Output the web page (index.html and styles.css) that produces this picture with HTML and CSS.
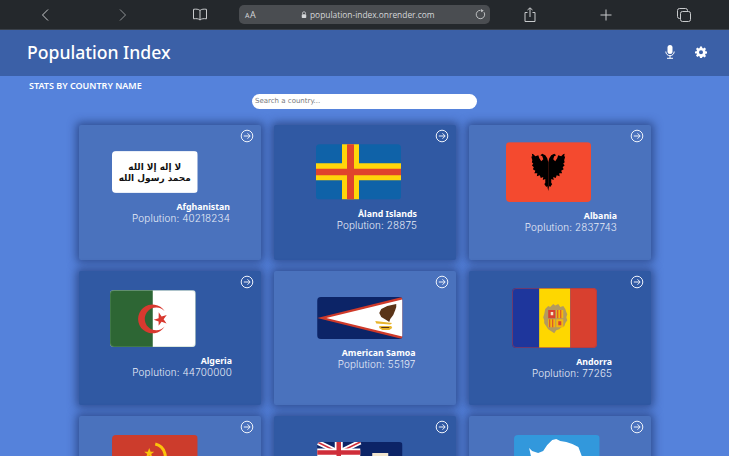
FILE: index.html
```html
<!DOCTYPE html>
<html lang="en">
<head>
<meta charset="utf-8">
<title>Population Index</title>
<link rel="stylesheet" href="styles.css">
</head>
<body>
<div class="browserbar">
  <svg class="tb tb-back" viewBox="0 0 12 14"><path d="M8 1.500 2.500 7 8 12.500" class="tbs"/></svg>
  <svg class="tb tb-fwd" viewBox="0 0 12 14"><path d="M4 1.500 9.500 7 4 12.500" class="tbs dim"/></svg>
  <svg class="tb tb-book" viewBox="0 0 16 13"><path d="M8 2.500C6.500 1 4 1 1.500 1.300v9.500C4 10.500 6.500 10.500 8 12c1.500-1.500 4-1.500 6.500-1.200V1.300C12 1 9.500 1 8 2.500Zm0 0V12" class="tbs"/></svg>
  <div class="urlbar">
    <span class="aa"><small>A</small>A</span>
    <span class="url"><svg class="lock" viewBox="0 0 8 9"><path d="M2 4V2.800a2 2 0 0 1 4 0V4" fill="none" stroke="#d5d7d9"/><rect x="1" y="4" width="6" height="5" rx="1" fill="#d5d7d9"/></svg>population-index.onrender.com</span>
    <svg class="reload" viewBox="0 0 12 12"><path d="M9.800 3.500A4.600 4.600 0 1 1 6 1.400" class="tbs"/><path d="M6.500 0 9.500 1.800 6.800 3.500Z" fill="#c8cacc"/></svg>
  </div>
  <svg class="tb tb-share" viewBox="0 0 12 15"><path d="M3.500 5.500H1v9h10v-9H8.500M6 10V1M3.500 3 6 .8 8.500 3" class="tbs"/></svg>
  <svg class="tb tb-plus" viewBox="0 0 12 12"><path d="M6 .5v11M.5 6h11" class="tbs"/></svg>
  <svg class="tb tb-tabs" viewBox="0 0 14 14"><rect x="3.500" y="3.500" width="10" height="10" rx="2" class="tbs"/><path d="M3 10.500h-.5a2 2 0 0 1-2-2V2.500a2 2 0 0 1 2-2h6a2 2 0 0 1 2 2V3" class="tbs"/></svg>
</div>

<header class="appbar">
  <h1>Population Index</h1>
  <div class="appicons">
    <svg class="ic-mic" viewBox="0 0 10 14"><rect x="2.500" y="0" width="5" height="9" rx="2.500" fill="#fff"/><path d="M.8 6.500a4.200 4.200 0 0 0 8.400 0M5 11v2.300M2 13.300h6" fill="none" stroke="#fff"/></svg>
    <svg class="ic-gear" viewBox="0 0 24 24"><path fill="#fff" fill-rule="evenodd" d="M10 1h4l.6 3.200 1.900.8 2.700-1.800 2.800 2.800-1.800 2.700.8 1.900L24 11v4l-3 .6-.8 1.900 1.800 2.700-2.800 2.800-2.700-1.800-1.900.8L14 24h-4l-.6-3.200-1.900-.8-2.700 1.800L2 19l1.800-2.700-.8-1.900L0 15v-4l3.200-.6.800-1.900L2 5.800 4.800 3l2.700 1.800 1.900-.8ZM12 8.500a4 4 0 1 0 0 8 4 4 0 0 0 0-8Z"/></svg>
  </div>
</header>

<main class="page">
  <div class="topline">
    <h2>STATS BY COUNTRY NAME</h2>
    <input class="search" type="text" placeholder="Search a country...">
  </div>

  <section class="grid">
    <article class="card light c-af">
      <svg class="go" viewBox="0 0 14 14"><circle cx="7" cy="7" r="5.800"/><path d="M3.800 7h6.200M7.500 4.300 10.200 7 7.500 9.700"/></svg>
      <svg class="flag f42" viewBox="0 0 86 42"><rect width="86" height="42" fill="#fff"/><text class="shahada" x="43" y="19" text-anchor="middle" direction="rtl">لا إله إلا الله</text><text class="shahada" x="43" y="30" text-anchor="middle" direction="rtl">محمد رسول الله</text></svg>
      <div class="meta"><strong>Afghanistan</strong><span>Poplution: 40218234</span></div>
    </article>

    <article class="card dark c-ax">
      <svg class="go" viewBox="0 0 14 14"><circle cx="7" cy="7" r="5.800"/><path d="M3.800 7h6.200M7.500 4.300 10.200 7 7.500 9.700"/></svg>
      <svg class="flag f55" viewBox="0 0 85 55"><rect width="85" height="55" fill="#0f62a8"/><path d="M26 0h17v55H26zM0 19h85v17H0z" fill="#ffd60a"/><path d="M31 0h7v55h-7zM0 24.500h85v6.500H0z" fill="#e0442c"/></svg>
      <div class="meta"><strong>Åland Islands</strong><span>Poplution: 28875</span></div>
    </article>

    <article class="card light c-al">
      <svg class="go" viewBox="0 0 14 14"><circle cx="7" cy="7" r="5.800"/><path d="M3.800 7h6.200M7.500 4.300 10.200 7 7.500 9.700"/></svg>
      <svg class="flag f60" viewBox="0 0 86 60"><rect width="86" height="60" fill="#f44a2f"/><path fill="#000" transform="translate(42.500 0)" d="M0 20 1 16 3 13 6 11.500 8 13 6 14 5 17 7 19 9 16 10 13 13 14 15 12 16.500 11.500 16 14 17 14.500 16 18 16.500 20 15 21.500 16.500 23 14.500 25 15.500 27 13 28.500 14 31 11 31 11.500 34 8.500 33 7.500 36 5 35 5.500 38 3 37 3 41 4 42 2 45 1 44 0 49Z"/><path fill="#000" transform="translate(42.500 0) scale(-1 1)" d="M0 20 1 16 3 13 6 11.500 8 13 6 14 5 17 7 19 9 16 10 13 13 14 15 12 16.500 11.500 16 14 17 14.500 16 18 16.500 20 15 21.500 16.500 23 14.500 25 15.500 27 13 28.500 14 31 11 31 11.500 34 8.500 33 7.500 36 5 35 5.500 38 3 37 3 41 4 42 2 45 1 44 0 49Z"/></svg>
      <div class="meta"><strong>Albania</strong><span>Poplution: 2837743</span></div>
    </article>

    <article class="card dark c-dz">
      <svg class="go" viewBox="0 0 14 14"><circle cx="7" cy="7" r="5.800"/><path d="M3.800 7h6.200M7.500 4.300 10.200 7 7.500 9.700"/></svg>
      <svg class="flag f57 flagline" viewBox="0 0 86 57"><rect width="86" height="57" fill="#fff"/><rect width="43" height="57" fill="#2d6634"/><path fill="#d8392f" d="M55 21a14.500 14.500 0 1 0 0 15.500 11.500 11.500 0 1 1 0-15.500Z"/><path fill="#d8392f" d="m49 22 2.900 4.300 5.200-1.500-3.200 4.200 3 4.300-5-1.800-3 4.200V31.400l-5-1.700 5-1.500Z"/></svg>
      <div class="meta"><strong>Algeria</strong><span>Poplution: 44700000</span></div>
    </article>

    <article class="card light c-as">
      <svg class="go" viewBox="0 0 14 14"><circle cx="7" cy="7" r="5.800"/><path d="M3.800 7h6.200M7.500 4.300 10.200 7 7.500 9.700"/></svg>
      <svg class="flag f42" viewBox="0 0 85 42"><rect width="85" height="42" fill="#0c2467"/><path d="M85 0v42L0 21Z" fill="#cf3a2a"/><path d="M85 2.500v37L9 21Z" fill="#fff"/><path fill="#5a3418" d="M79 7 70 9l-6 3-2 4 2 4 5 3 3 2 1-3 3-4 2-5 1-3z"/><path fill="#e8b52d" d="M58 24l17 2-2 1.500-14-1zM62 29h12l1 2-3 2h-7l-3-2z"/><path fill="#5a3418" d="M64 30h8v1h-8z"/></svg>
      <div class="meta"><strong>American Samoa</strong><span>Poplution: 55197</span></div>
    </article>

    <article class="card dark c-ad">
      <svg class="go" viewBox="0 0 14 14"><circle cx="7" cy="7" r="5.800"/><path d="M3.800 7h6.200M7.500 4.300 10.200 7 7.500 9.700"/></svg>
      <svg class="flag f60 flagline-red" viewBox="0 0 85 60"><rect width="27" height="60" fill="#1e369c"/><rect x="27" width="31" height="60" fill="#fed700"/><rect x="58" width="27" height="60" fill="#d8402f"/><path fill="#b39a5e" d="M33 21l3-3 2 1 3-3 2 1.500 3-1.500 2 3 3-1 2 3 1 3 1 2-1 3 1 3-2 3-1 3-3 1-2 2-3 1-2 3-3-2-3-2-2-3-2-3 0-3-1-3 1-3z"/><path fill="#d8402f" d="M36 22h7v8h-7z"/><path fill="#f3b70e" d="M44 22h7v8h-7zM36 31h7v8h-7zM44 31h7v8h-7z"/><path fill="#d8402f" d="M45 22h1v8h-1zM48 22h1v8h-1zM37 31h1v8h-1zM40 31h1v8h-1zM46 33h3v4h-3z"/><path fill="#f4e6c8" d="M38.500 24h2.500v3h-2.500z"/></svg>
      <div class="meta"><strong>Andorra</strong><span>Poplution: 77265</span></div>
    </article>

    <article class="card light c-ao">
      <svg class="go" viewBox="0 0 14 14"><circle cx="7" cy="7" r="5.800"/><path d="M3.800 7h6.200M7.500 4.300 10.200 7 7.500 9.700"/></svg>
      <svg class="flag f60" viewBox="0 0 85 60"><rect width="85" height="30" fill="#cc3c2c"/><rect y="30" width="85" height="30" fill="#000"/><path d="M43 9a13 13 0 0 1 6 22" fill="none" stroke="#fcc30b" stroke-width="3"/><path d="m37 13 1.400 3.600h3.600l-3 2.300 1.200 3.700-3.200-2.300-3.200 2.300 1.200-3.700-3-2.300h3.600Z" fill="#fcc30b"/></svg>
    </article>

    <article class="card dark c-ai">
      <svg class="go" viewBox="0 0 14 14"><circle cx="7" cy="7" r="5.800"/><path d="M3.800 7h6.200M7.500 4.300 10.200 7 7.500 9.700"/></svg>
      <svg class="flag f42" viewBox="0 0 85 42"><rect width="85" height="42" fill="#0c2467"/><path d="M0 0l43 21M43 0 0 21" stroke="#fff" stroke-width="5"/><path d="M0 0l43 21M43 0 0 21" stroke="#cf2e3a" stroke-width="1.600"/><path d="M21.500 0v21M0 10.500h43" stroke="#fff" stroke-width="8"/><path d="M21.500 0v21M0 10.500h43" stroke="#cf2e3a" stroke-width="4.500"/><path d="M55 11h16v13H55z" fill="#f2e6cf"/></svg>
    </article>

    <article class="card light c-aq">
      <svg class="go" viewBox="0 0 14 14"><circle cx="7" cy="7" r="5.800"/><path d="M3.800 7h6.200M7.500 4.300 10.200 7 7.500 9.700"/></svg>
      <svg class="flag f60" viewBox="0 0 85 60"><rect width="85" height="60" fill="#3298dc"/><path fill="#fff" d="M15 13 18 16 24 18 29 16 33 10 38 5 42 4 46 6 52 7 58 9 64 12 67 20 70 27 60 45 35 50 20 35Z"/></svg>
    </article>
  </section>
</main>
</body>
</html>
```

FILE: styles.css
```css
* { box-sizing: border-box; }
html, body { margin: 0; height: 100%; }
body {
  width: 729px;
  height: 456px;
  overflow: hidden;
  background: #5582db;
  font-family: "Noto Sans", sans-serif;
  color: #fff;
}

/* browser chrome */
.browserbar {
  height: 30px;
  background: #24282c;
  display: flex;
  align-items: center;
  border-bottom: 1px solid #3a4049;
}
.tb { display: block; flex: none; }
.tbs { fill: none; stroke: #c8cacc; stroke-width: 1; }
.tbs.dim { stroke: #8f9295; }
.tb-back { width: 12px; height: 14px; margin-left: 40px; }
.tb-fwd { width: 12px; height: 14px; margin-left: 64px; }
.tb-book { width: 16px; height: 13px; margin-left: 64px; }
.urlbar {
  width: 251px;
  height: 19px;
  margin-left: 31px;
  background: #4a4d51;
  border-radius: 5px;
  display: flex;
  align-items: center;
  padding: 0 4px 0 6px;
  font-family: "Open Sans", sans-serif;
  font-size: 8.400px;
  color: #d5d7d9;
}
.aa { width: 56px; letter-spacing: .5px; font-size: 9px; }
.aa small { font-size: 7px; }
.url { flex: 1; display: flex; align-items: center; }
.lock { width: 6px; height: 7px; margin-right: 3px; }
.reload { width: 11px; height: 11px; }
.tb-share { width: 12px; height: 15px; margin-left: 34px; }
.tb-plus { width: 12px; height: 12px; margin-left: 64px; }
.tb-tabs { width: 14px; height: 14px; margin-left: 65px; }

/* app bar */
.appbar {
  height: 46px;
  background: #3b60a7;
  display: flex;
  align-items: center;
  justify-content: space-between;
  padding: 0 22px 2px 27px;
}
.appbar h1 {
  margin: 0;
  font-weight: 500;
  font-size: 17.600px;
}
.appicons { display: flex; align-items: center; gap: 20px; }
.ic-mic { width: 10px; height: 14px; }
.ic-gear { width: 12px; height: 12px; }

/* page */
.page { padding: 0 0 0 79px; }
.topline {
  position: relative;
  height: 49px;
}
.topline h2 {
  position: absolute;
  left: -50px;
  top: 3px;
  margin: 0;
  font-size: 9px;
  line-height: 13px;
  font-weight: 600;
}
.search {
  position: absolute;
  left: 173px;
  top: 17.500px;
  width: 225px;
  height: 15px;
  border: 0;
  border-radius: 7.500px;
  background: #fff;
  padding: 0 3px;
  font-family: "DejaVu Sans", sans-serif;
  font-size: 7px;
  outline: 0;
}
.search::placeholder { color: #77797d; }

.grid {
  display: grid;
  grid-template-columns: repeat(3, 182px);
  grid-auto-rows: 134.500px;
  column-gap: 13px;
  row-gap: 11px;
}
.card {
  position: relative;
  border-radius: 2px;
  display: flex;
  flex-direction: column;
  align-items: flex-start;
  box-shadow: 0 0 8px 3px rgba(28, 50, 105, .62);
}
.light { background: #4a72bd; }
.dark { background: #3059a3; }
.go {
  position: absolute;
  top: 4px;
  right: 7px;
  width: 14px;
  height: 14px;
  fill: none;
  stroke: #eef2fa;
  stroke-width: 1;
}
.flag { display: block; border-radius: 4px; flex: none; }
.f42 { width: 85.500px; height: 42px; }
.f55 { width: 85px; height: 55.500px; }
.f57 { width: 85.500px; height: 57.300px; }
.f60 { width: 85.500px; height: 60.300px; }
.flagline { outline: 1px solid rgba(120, 170, 130, .25); outline-offset: -1px; }
.flagline-red { outline: 1px solid rgba(160, 60, 80, .6); outline-offset: -1px; }
.shahada { font-family: "DejaVu Sans", sans-serif; font-size: 9px; font-weight: 700; fill: #111; }

.meta {
  display: flex;
  flex-direction: column;
  align-items: flex-end;
  margin-top: 9px;
  line-height: 11px;
  white-space: nowrap;
}
.meta strong {
  font-size: 8.800px;
  font-weight: 700;
}
.meta span {
  font-family: "Inter", sans-serif;
  font-size: 9.900px;
  font-weight: 300;
  letter-spacing: .15px;
  color: #e6ebf7;
}

/* each card's free placement of flag and caption */
.c-af .flag { margin: 26px 0 0 33px; }
.c-af .meta { width: 151px; }
.c-ax .flag { margin: 19px 0 0 42px; }
.c-ax .meta { width: 143px; }
.c-al .flag { margin: 17px 0 0 36.500px; }
.c-al .meta { width: 148px; }
.c-dz .flag { margin: 19px 0 0 31px; }
.c-dz .meta { width: 153px; }
.c-as .flag { margin: 26px 0 0 43px; }
.c-as .meta { width: 141.500px; }
.c-ad .flag { margin: 17px 0 0 42.500px; }
.c-ad .meta { width: 143px; }
.c-ao .flag { margin: 19px 0 0 33px; }
.c-ai .flag { margin: 26px 0 0 43px; }
.c-aq .flag { margin: 19px 0 0 45px; }
```
